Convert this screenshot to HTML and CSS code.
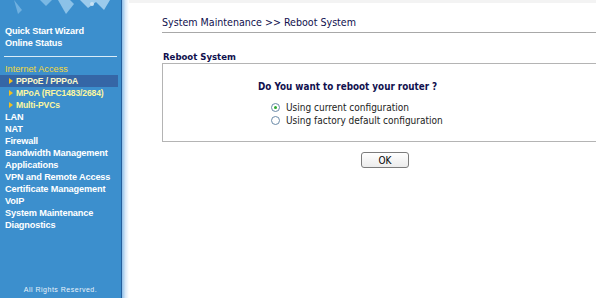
FILE: index.html
```html
<!DOCTYPE html>
<html lang="en">
<head>
  <meta charset="UTF-8">
  <title>System Maintenance - Reboot System</title>
  <link rel="stylesheet" href="styles.css">
</head>
<body>
  <div id="sidebar">
    <svg class="deco" width="121" height="18" viewBox="0 0 121 18">
      <path d="M14 0 L22 10 L18 14 Z" fill="#6fb0e0"/>
      <path d="M40 0 L46 6 L52 0 Z" fill="#7ab8e4"/>
      <path d="M58 0 L66 14 L74 4 L70 0 Z" fill="#8cc2e8"/>
      <path d="M80 0 L88 8 L96 2 L104 10 L110 0 Z" fill="#9ccbec"/>
      <circle cx="92" cy="4" r="2" fill="#c8e2f4"/>
    </svg>
    <ul class="menu">
      <li>Quick Start Wizard</li>
      <li>Online Status</li>
    </ul>
    <hr class="sep">
    <ul class="menu">
      <li class="group">Internet Access</li>
      <li class="sub active">PPPoE / PPPoA</li>
      <li class="sub">MPoA (RFC1483/2684)</li>
      <li class="sub">Multi-PVCs</li>
      <li>LAN</li>
      <li>NAT</li>
      <li>Firewall</li>
      <li>Bandwidth Management</li>
      <li>Applications</li>
      <li>VPN and Remote Access</li>
      <li>Certificate Management</li>
      <li>VoIP</li>
      <li>System Maintenance</li>
      <li>Diagnostics</li>
    </ul>
    <div class="copy">All Rights Reserved.</div>
  </div>
  <div id="edge"></div>
  <div id="content">
    <div class="title">System Maintenance &gt;&gt; Reboot System</div>
    <div class="section">Reboot System</div>
    <div class="box">
      <div class="question">Do You want to reboot your router ?</div>
      <label class="opt"><span class="radio checked"></span>Using current configuration</label>
      <label class="opt"><span class="radio"></span>Using factory default configuration</label>
    </div>
    <div class="actions">
      <button type="button">OK</button>
    </div>
  </div>
</body>
</html>
```

FILE: styles.css
```css
html, body {
  margin: 0;
  padding: 0;
  height: 100%;
}

body {
  display: flex;
  background-color: #fff;
  font-family: "DejaVu Sans Condensed", "DejaVu Sans", sans-serif;
  overflow: hidden;
}

#sidebar {
  width: 121px;
  height: 298px;
  background-color: #3c8fcd;
  border-right: 1px solid #24609e;
  position: relative;
  font-family: "Liberation Sans", Arial, sans-serif;
  font-weight: bold;
  font-size: 9.2px;
  color: #fff;
}

.deco {
  display: block;
}

.menu {
  list-style: none;
  margin: 0;
  padding: 0;
}

.menu li {
  height: 12px;
  line-height: 12px;
  padding-left: 5px;
  letter-spacing: -0.15px;
}

.menu:first-of-type {
  margin-top: 7px;
}

.sep {
  margin: 7px 4px 6px 4px;
  border: none;
  height: 1px;
  background-color: #d9ecf8;
}

.menu li.group {
  color: #f2d83e;
  font-weight: normal;
  letter-spacing: 0;
}

.menu li.sub {
  padding-left: 16px;
  color: #fbf6a0;
  font-size: 8.6px;
  position: relative;
}

.menu li.sub::before {
  content: "";
  position: absolute;
  left: 9px;
  top: 3px;
  border-left: 4px solid #f2c020;
  border-top: 3px solid transparent;
  border-bottom: 3px solid transparent;
}

.menu li.active {
  background-color: #3566a6;
  margin-right: 3px;
  color: #fdf8c8;
}

.copy {
  position: absolute;
  bottom: 5px;
  left: 0;
  right: 0;
  text-align: center;
  font-weight: normal;
  font-size: 7px;
  letter-spacing: 0.5px;
  color: #e8f2fa;
}

#edge {
  width: 7px;
  height: 298px;
  background: linear-gradient(to right, #8fbfe8, #dbeaf8 50%, #fff);
}

#content {
  flex: 1;
  padding-left: 33px;
  border-top: 3px solid #f3f3f3;
  font-size: 10px;
  color: #000;
}

.title {
  margin-top: 13px;
  padding-bottom: 4px;
  border-bottom: 1px solid #a8a8a8;
  font-size: 10.6px;
  color: #10104e;
}

.section {
  margin-top: 18px;
  padding-bottom: 1px;
  padding-left: 1px;
  font-weight: bold;
  font-size: 9.5px;
  color: #10104e;
}

.box {
  border-top: 1px solid #b4b4b4;
  border-left: 1px solid #b4b4b4;
  border-bottom: 1px solid #b4b4b4;
  height: 77px;
  display: flex;
  flex-direction: column;
  padding-left: 108px;
}

.question {
  margin-top: 17px;
  margin-bottom: 9px;
  margin-left: -13px;
  font-weight: bold;
  font-size: 9.8px;
  color: #10104e;
}

.opt {
  display: flex;
  align-items: center;
  height: 13px;
  color: #222;
}

.radio {
  width: 7px;
  height: 7px;
  border: 1px solid #6a8aa8;
  border-radius: 50%;
  margin-right: 6px;
  background: #fff;
  position: relative;
}

.radio.checked::after {
  content: "";
  position: absolute;
  left: 2px;
  top: 2px;
  width: 3px;
  height: 3px;
  border-radius: 50%;
  background: #2aa830;
}

.actions {
  padding-top: 10px;
  padding-left: 199px;
}

button {
  width: 48px;
  height: 16px;
  padding: 0;
  border: 1px solid #7c7c7c;
  border-radius: 3px;
  background: linear-gradient(#fff, #ececec);
  font-family: "DejaVu Sans Condensed", "DejaVu Sans", sans-serif;
  font-size: 10px;
  color: #000;
}
```
